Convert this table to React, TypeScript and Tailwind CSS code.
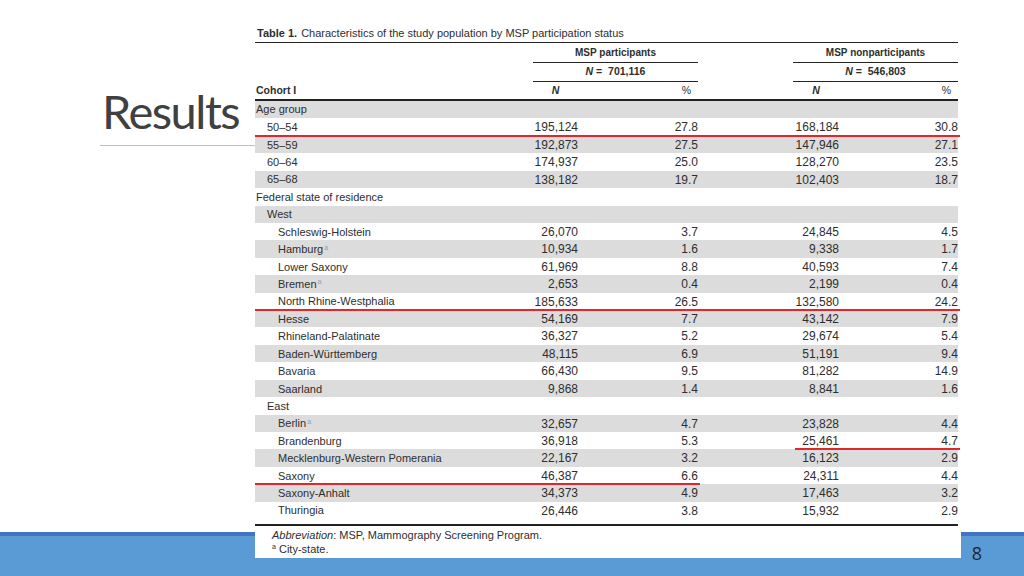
import React from "react";

type Row = {
  label: string;
  level: 0 | 1 | 2;
  sup?: boolean;
  pN?: string;
  pP?: string;
  nN?: string;
  nP?: string;
  mark?: "full" | "part" | "nonpart";
};

const rows: Row[] = [
  { label: "Age group", level: 0 },
  { label: "50–54", level: 1, pN: "195,124", pP: "27.8", nN: "168,184", nP: "30.8", mark: "full" },
  { label: "55–59", level: 1, pN: "192,873", pP: "27.5", nN: "147,946", nP: "27.1" },
  { label: "60–64", level: 1, pN: "174,937", pP: "25.0", nN: "128,270", nP: "23.5" },
  { label: "65–68", level: 1, pN: "138,182", pP: "19.7", nN: "102,403", nP: "18.7" },
  { label: "Federal state of residence", level: 0 },
  { label: "West", level: 1 },
  { label: "Schleswig-Holstein", level: 2, pN: "26,070", pP: "3.7", nN: "24,845", nP: "4.5" },
  { label: "Hamburg", level: 2, sup: true, pN: "10,934", pP: "1.6", nN: "9,338", nP: "1.7" },
  { label: "Lower Saxony", level: 2, pN: "61,969", pP: "8.8", nN: "40,593", nP: "7.4" },
  { label: "Bremen", level: 2, sup: true, pN: "2,653", pP: "0.4", nN: "2,199", nP: "0.4" },
  { label: "North Rhine-Westphalia", level: 2, pN: "185,633", pP: "26.5", nN: "132,580", nP: "24.2", mark: "full" },
  { label: "Hesse", level: 2, pN: "54,169", pP: "7.7", nN: "43,142", nP: "7.9" },
  { label: "Rhineland-Palatinate", level: 2, pN: "36,327", pP: "5.2", nN: "29,674", nP: "5.4" },
  { label: "Baden-Württemberg", level: 2, pN: "48,115", pP: "6.9", nN: "51,191", nP: "9.4" },
  { label: "Bavaria", level: 2, pN: "66,430", pP: "9.5", nN: "81,282", nP: "14.9" },
  { label: "Saarland", level: 2, pN: "9,868", pP: "1.4", nN: "8,841", nP: "1.6" },
  { label: "East", level: 1 },
  { label: "Berlin", level: 2, sup: true, pN: "32,657", pP: "4.7", nN: "23,828", nP: "4.4" },
  { label: "Brandenburg", level: 2, pN: "36,918", pP: "5.3", nN: "25,461", nP: "4.7", mark: "nonpart" },
  { label: "Mecklenburg-Western Pomerania", level: 2, pN: "22,167", pP: "3.2", nN: "16,123", nP: "2.9" },
  { label: "Saxony", level: 2, pN: "46,387", pP: "6.6", nN: "24,311", nP: "4.4", mark: "part" },
  { label: "Saxony-Anhalt", level: 2, pN: "34,373", pP: "4.9", nN: "17,463", nP: "3.2" },
  { label: "Thuringia", level: 2, pN: "26,446", pP: "3.8", nN: "15,932", nP: "2.9" },
];

const cols = "grid grid-cols-[278px_45px_120px_95px_46px_119px]";
const indent = ["pl-[1px]", "pl-[12px]", "pl-[23px]"];

function TableRow({ row, idx }: { row: Row; idx: number }) {
  return (
    <div
      className={`${cols} relative h-[17.43px] items-center text-[11px] ${idx % 2 === 0 ? "bg-[#dcdcdc]" : ""}`}
    >
      <div className={`${indent[row.level]} whitespace-nowrap`}>
        {row.label}
        {row.sup && <sup className="ml-[1px] text-[7px] text-[#8aa4c4]">a</sup>}
      </div>
      <div className="text-right text-[12px]">{row.pN}</div>
      <div className="text-right text-[12px]">{row.pP}</div>
      <div />
      <div className="text-right text-[12px]">{row.nN}</div>
      <div className="text-right text-[12px]">{row.nP}</div>

      {/* hand-drawn red highlight lines */}
      {row.mark === "full" && (
        <div className="absolute bottom-[-1px] left-0 right-[-2px] z-10 h-[2px] bg-[#e3262b]" />
      )}
      {row.mark === "part" && (
        <div className="absolute bottom-[-1px] left-0 z-10 h-[2px] w-[445px] bg-[#e3262b]" />
      )}
      {row.mark === "nonpart" && (
        <div className="absolute bottom-[-1px] left-[540px] z-10 h-[2px] w-[165px] bg-[#e3262b]" />
      )}
    </div>
  );
}

function StudyTable() {
  return (
    <div className="relative z-10 mt-[20px] h-[538px] w-[706px] bg-white text-[#2e2e2e] font-['Liberation_Sans',sans-serif]">
      <div className="w-[703px]">
        {/* caption */}
        <div className="flex h-[22px] items-center whitespace-nowrap pl-[2px] pt-[4px] text-[11px]">
          <span className="font-bold">Table 1.</span>
          <span className="ml-[4px]">Characteristics of the study population by MSP participation status</span>
        </div>
        <div className="h-px bg-[#222]" />

        {/* group headers */}
        <div className={`${cols} h-[19px] items-center text-[10px] font-bold`}>
          <div />
          <div className="col-span-2 text-center">MSP participants</div>
          <div />
          <div className="col-span-2 text-center">MSP nonparticipants</div>
        </div>
        <div className={cols}>
          <div />
          <div className="col-span-2 h-px bg-[#222]" />
          <div />
          <div className="col-span-2 h-px bg-[#222]" />
        </div>
        <div className={`${cols} h-[18px] items-center text-[10.5px] font-bold`}>
          <div />
          <div className="col-span-2 text-center whitespace-pre">
            <i>N</i>{" =  701,116"}
          </div>
          <div />
          <div className="col-span-2 text-center whitespace-pre">
            <i>N</i>{" =  546,803"}
          </div>
        </div>
        <div className={cols}>
          <div />
          <div className="col-span-2 h-px bg-[#222]" />
          <div />
          <div className="col-span-2 h-px bg-[#222]" />
        </div>
        <div className={`${cols} h-[17px] items-center text-[10.5px]`}>
          <div className="pl-[1px] font-bold">Cohort I</div>
          <div className="text-center font-bold italic">N</div>
          <div className="pr-[7px] text-right">%</div>
          <div />
          <div className="text-center font-bold italic">N</div>
          <div className="pr-[7px] text-right">%</div>
        </div>
        <div className="h-[2px] bg-[#222]" />

        {/* body */}
        {rows.map((row, idx) => (
          <TableRow key={idx} row={row} idx={idx} />
        ))}
        <div className="h-[5px]" />
        <div className="h-[1.5px] bg-[#222]" />

        {/* footnotes */}
        <div className="pl-[17px] pt-[2px] text-[11px] leading-[14px]">
          <div>
            <i>Abbreviation</i>: MSP, Mammography Screening Program.
          </div>
          <div>
            <sup className="text-[7px]">a</sup> City-state.
          </div>
        </div>
      </div>
    </div>
  );
}

export default function App() {
  return (
    <div className="flex h-[576px] w-[1024px] flex-col overflow-hidden bg-white">
      <div className="flex h-[532px] shrink-0">
        <div className="w-[255px] shrink-0 pt-[83px]">
          <h1 className="pl-[102px] text-[47px] leading-[56px] tracking-[-1.5px] text-[#404040] font-['Lato',sans-serif]">
            Results
          </h1>
          <div className="ml-[100px] mt-[6px] h-px bg-[#bfbfbf]" />
        </div>
        <StudyTable />
      </div>

      {/* footer band */}
      <div className="flex-1">
        <div className="h-[4px] bg-[#4472c4]" />
        <div className="flex h-[40px] justify-end bg-[#5b9bd5] pr-[42px] pt-[3px]">
          <span className="text-[18px] leading-[28px] text-[#1d2636] font-['Open_Sans',sans-serif]">8</span>
        </div>
      </div>
    </div>
  );
}
